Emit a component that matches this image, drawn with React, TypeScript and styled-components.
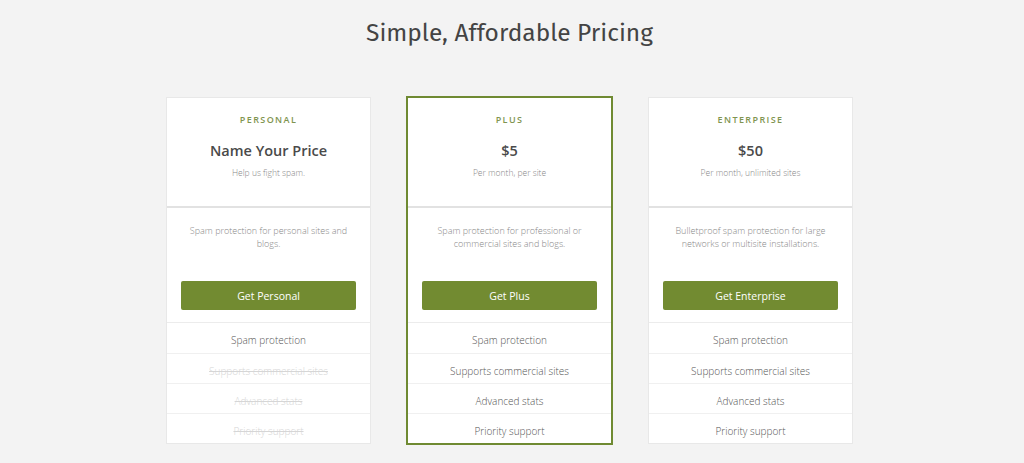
import styled, { createGlobalStyle } from "styled-components";

interface Plan {
    name: string;
    price: string;
    note: string;
    blurb: string;
    cta: string;
    featured?: boolean;
    features: { label: string; included: boolean }[];
}

const FEATURES = ['Spam protection', 'Supports commercial sites', 'Advanced stats', 'Priority support'];

const plans: Plan[] = [
    {
        name: 'Personal',
        price: 'Name Your Price',
        note: 'Help us fight spam.',
        blurb: 'Spam protection for personal sites and blogs.',
        cta: 'Get Personal',
        features: FEATURES.map((label, i) => ({ label, included: i === 0 })),
    },
    {
        name: 'Plus',
        price: '$5',
        note: 'Per month, per site',
        blurb: 'Spam protection for professional or commercial sites and blogs.',
        cta: 'Get Plus',
        featured: true,
        features: FEATURES.map((label) => ({ label, included: true })),
    },
    {
        name: 'Enterprise',
        price: '$50',
        note: 'Per month, unlimited sites',
        blurb: 'Bulletproof spam protection for large networks or multisite installations.',
        cta: 'Get Enterprise',
        features: FEATURES.map((label) => ({ label, included: true })),
    },
];

export default function App() {
    return (
        <>
            <GlobalStyle />
            <Page>
                <Title>Simple, Affordable Pricing</Title>
                <CardRow>
                    {plans.map((plan) => (
                        <Card key={plan.name} $featured={plan.featured}>
                            <CardHead>
                                <PlanName>{plan.name}</PlanName>
                                <Price>{plan.price}</Price>
                                <Note>{plan.note}</Note>
                            </CardHead>
                            <CardBody>
                                <Blurb>{plan.blurb}</Blurb>
                                <CtaButton>{plan.cta}</CtaButton>
                            </CardBody>
                            <FeatureList>
                                {plan.features.map((f) => (
                                    <Feature key={f.label} $off={!f.included}>{f.label}</Feature>
                                ))}
                            </FeatureList>
                        </Card>
                    ))}
                </CardRow>
            </Page>
        </>
    );
}

const GlobalStyle = createGlobalStyle`
    html, body {
        margin: 0;
        padding: 0;
        background: #f3f3f3;
    }
    body {
        font-family: "Open Sans", "Liberation Sans", sans-serif;
        color: #555;
    }
`;

const Page = styled.div`
    width: 1024px;
    height: 463px;
    box-sizing: border-box;
    padding-top: 15px;
    display: flex;
    flex-direction: column;
    align-items: center;
    overflow: hidden;
`;

const Title = styled.h1`
    margin: 0 5px 0 0;
    font-family: "Fira Sans", "Open Sans", sans-serif;
    font-weight: 400;
    font-size: 24.5px;
    line-height: 36px;
    color: #444;
`;

const CardRow = styled.div`
    margin-top: 46px;
    padding-right: 5px;
    display: flex;
    align-items: flex-start;
    gap: 35px;
`;

const Card = styled.div<{ $featured?: boolean }>`
    width: 205px;
    background: #fff;
    border: 1px solid #e8e8e8;
    box-sizing: border-box;
    display: flex;
    flex-direction: column;
    ${(p) => p.$featured && `
        width: 207px;
        border: 2px solid #6f8a32;
        margin-top: -1px;
    `}
`;

const CardHead = styled.div`
    height: 110px;
    box-sizing: border-box;
    padding-top: 16px;
    text-align: center;
    border-bottom: 2px solid #e2e2e2;
`;

const PlanName = styled.div`
    font-size: 9px;
    font-weight: 600;
    letter-spacing: 1.4px;
    text-transform: uppercase;
    color: #7f9450;
    line-height: 12px;
`;

const Price = styled.div`
    margin-top: 15px;
    font-size: 14.5px;
    font-weight: 600;
    color: #4a4a4a;
    line-height: 20px;
`;

const Note = styled.div`
    margin-top: 6px;
    font-size: 8.5px;
    font-weight: 300;
    color: #888;
    line-height: 12px;
`;

const CardBody = styled.div`
    height: 115px;
    box-sizing: border-box;
    padding: 16px 14px 0;
    display: flex;
    flex-direction: column;
    align-items: stretch;
    border-bottom: 1px solid #ececec;
`;

const Blurb = styled.p`
    margin: 0 4px;
    height: 57px;
    font-size: 9px;
    font-weight: 300;
    line-height: 13px;
    color: #888;
    text-align: center;
`;

const CtaButton = styled.button`
    height: 29px;
    border: none;
    border-radius: 2px;
    background: #728b31;
    color: #fff;
    font-family: "Open Sans", "Liberation Sans", sans-serif;
    font-size: 10.5px;
    font-weight: 400;
    cursor: pointer;
`;

const FeatureList = styled.ul`
    list-style: none;
    margin: 0;
    padding: 0;
`;

const Feature = styled.li<{ $off?: boolean }>`
    height: 30px;
    box-sizing: border-box;
    padding-top: 4px;
    line-height: 26px;
    text-align: center;
    font-size: 10px;
    font-weight: 300;
    color: ${(p) => (p.$off ? '#d6d6d6' : '#555')};
    text-decoration: ${(p) => (p.$off ? 'line-through' : 'none')};
    & + & {
        border-top: 1px solid #f0f0f0;
    }
`;
